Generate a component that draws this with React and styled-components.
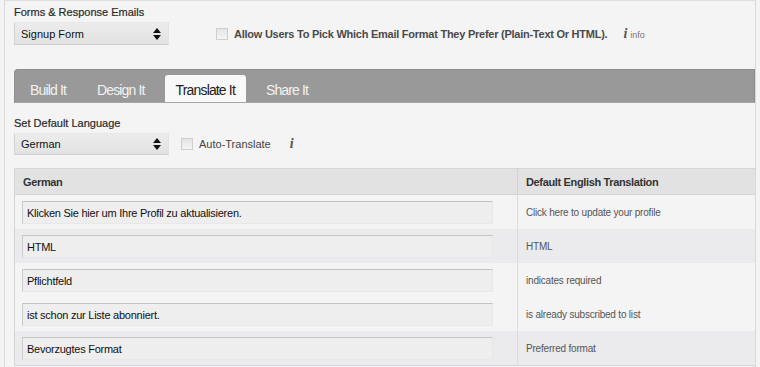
import styled, { createGlobalStyle } from "styled-components"

const GlobalStyle = createGlobalStyle`
  body {
    margin: 0;
    background: #f4f4f4;
    font-family: "Liberation Sans", Arial, sans-serif;
  }
`

const rows = [
  { de: "Klicken Sie hier um Ihre Profil zu aktualisieren.", en: "Click here to update your profile", dark: false },
  { de: "HTML", en: "HTML", dark: true },
  { de: "Pflichtfeld", en: "indicates required", dark: false },
  { de: "ist schon zur Liste abonniert.", en: "is already subscribed to list", dark: false },
  { de: "Bevorzugtes Format", en: "Preferred format", dark: true },
]

const tabs = ["Build It", "Design It", "Translate It", "Share It"]

function SelectArrows() {
  return (
    <svg width="8" height="12" viewBox="0 0 8 12">
      <path d="M4 0 L8 5 L0 5 Z" fill="#111" />
      <path d="M0 7 L8 7 L4 12 Z" fill="#111" />
    </svg>
  )
}

export default function App() {
  return (
    <>
      <GlobalStyle />
      <Page>
        <FieldLabel>Forms &amp; Response Emails</FieldLabel>
        <TopRow>
          <Select>
            <span>Signup Form</span>
            <SelectArrows />
          </Select>
          <CheckRow $gap="6px" $ml="47px">
            <Box />
            <BoldText>Allow Users To Pick Which Email Format They Prefer (Plain-Text Or HTML).</BoldText>
          </CheckRow>
          <Info $ml="16px">
            <InfoI>i</InfoI>
            <InfoText>info</InfoText>
          </Info>
        </TopRow>

        <TabBar>
          {tabs.map((t) => (
            <Tab key={t} $active={t === "Translate It"}>
              {t}
            </Tab>
          ))}
        </TabBar>

        <FieldLabel $mt="14px">Set Default Language</FieldLabel>
        <TopRow>
          <Select $h="22px">
            <span>German</span>
            <SelectArrows />
          </Select>
          <CheckRow $gap="6px" $ml="12px">
            <Box />
            <PlainText>Auto-Translate</PlainText>
          </CheckRow>
          <Info $ml="19px">
            <InfoI>i</InfoI>
          </Info>
        </TopRow>

        <Table>
          <HeadRow>
            <HeadCell $w="503px">German</HeadCell>
            <HeadCell>Default English Translation</HeadCell>
          </HeadRow>
          {rows.map((r) => (
            <Row key={r.de} $dark={r.dark}>
              <InputCell>
                <TextInput>{r.de}</TextInput>
              </InputCell>
              <EnCell>{r.en}</EnCell>
            </Row>
          ))}
        </Table>
      </Page>
    </>
  )
}

const Page = styled.div`
  margin-left: 4px;
  width: 752px;
  height: 367px;
  box-sizing: border-box;
  border-left: 1px solid #d8d8d8;
  border-right: 1px solid #d8d8d8;
  border-top: 1px solid #dedede;
  padding: 5px 0 0 9px;
  overflow: hidden;
`

const FieldLabel = styled.div`
  font-size: 11px;
  line-height: 13px;
  color: #2a2a2a;
  -webkit-text-stroke: 0.2px #2a2a2a;
  margin-top: ${(p) => p.$mt || "0"};
  margin-bottom: 3px;
`

const TopRow = styled.div`
  display: flex;
  align-items: center;
`

const Select = styled.div`
  width: 155px;
  height: ${(p) => p.$h || "23px"};
  box-sizing: border-box;
  display: flex;
  align-items: center;
  justify-content: space-between;
  padding: 0 7px 0 6px;
  background: linear-gradient(#ececec, #e2e2e2);
  border-left: 1px solid #d4d4d4;
  border-top: 1px solid #e8e8e8;
  border-bottom: 1px solid #cfcfcf;
  border-right: 1px solid #e4e4e4;
  font-size: 11px;
  color: #111;
`

const CheckRow = styled.div`
  display: flex;
  align-items: center;
  gap: ${(p) => p.$gap};
  margin-left: ${(p) => p.$ml};
`

const Box = styled.div`
  width: 12px;
  height: 12px;
  box-sizing: border-box;
  border: 1px solid #cfcfcf;
  background: linear-gradient(#e4e4e4, #f4f4f4);
`

const BoldText = styled.span`
  font-size: 11px;
  font-weight: bold;
  color: #4a4a4a;
  letter-spacing: -0.25px;
`

const PlainText = styled.span`
  font-size: 11px;
  color: #444;
`

const Info = styled.div`
  display: flex;
  align-items: baseline;
  gap: 3px;
  margin-left: ${(p) => p.$ml};
`

const InfoI = styled.span`
  font-family: "Liberation Serif", serif;
  font-style: italic;
  font-weight: bold;
  font-size: 14px;
  color: #555;
`

const InfoText = styled.span`
  font-size: 9px;
  color: #777;
`

const TabBar = styled.div`
  margin-top: 24px;
  height: 34px;
  box-sizing: border-box;
  background: #999;
  border: 1px solid #8d8d8d;
  border-bottom-color: #a5a5a5;
  border-radius: 4px 0 0 0;
  padding: 6px 0 0 4px;
  display: flex;
  align-items: flex-end;
  gap: 9px;
`

const Tab = styled.div`
  height: 27px;
  box-sizing: border-box;
  padding: 7px 11px 0;
  font-size: 14px;
  letter-spacing: -0.85px;
  color: ${(p) => (p.$active ? "#222" : "#f2f2f2")};
  background: ${(p) => (p.$active ? "#f8f8f8" : "transparent")};
  border-radius: 3px 3px 0 0;
`

const Table = styled.div`
  margin-top: 13px;
  border: 1px solid #d6d6d6;
  border-right: none;
`

const HeadRow = styled.div`
  display: flex;
  height: 25px;
  background: #e2e2e2;
  border-bottom: 1px solid #d4d4d4;
`

const HeadCell = styled.div`
  width: ${(p) => p.$w || "auto"};
  flex: ${(p) => (p.$w ? "none" : "1")};
  box-sizing: border-box;
  padding: 7px 0 0 8px;
  font-size: 11px;
  font-weight: bold;
  letter-spacing: -0.35px;
  color: #333;
  border-right: ${(p) => (p.$w ? "1px solid #d2d2d2" : "none")};
`

const Row = styled.div`
  display: flex;
  height: 34px;
  background: ${(p) => (p.$dark ? "#ebebed" : "#f4f4f4")};
`

const InputCell = styled.div`
  width: 503px;
  box-sizing: border-box;
  padding: 6px 0 0 7px;
  border-right: 1px solid #dcdcdc;
`

const TextInput = styled.div`
  width: 471px;
  height: 23px;
  box-sizing: border-box;
  padding: 5px 0 0 4px;
  background: #eeeeee;
  border-top: 1px solid #c4c4c4;
  border-left: 1px solid #cccccc;
  border-right: 1px solid #e6e6e6;
  border-bottom: 1px solid #e8e8e8;
  font-size: 11px;
  letter-spacing: -0.25px;
  color: #111;
`

const EnCell = styled.div`
  flex: 1;
  padding: 12px 0 0 8px;
  font-size: 10px;
  letter-spacing: -0.2px;
  color: #555;
`
